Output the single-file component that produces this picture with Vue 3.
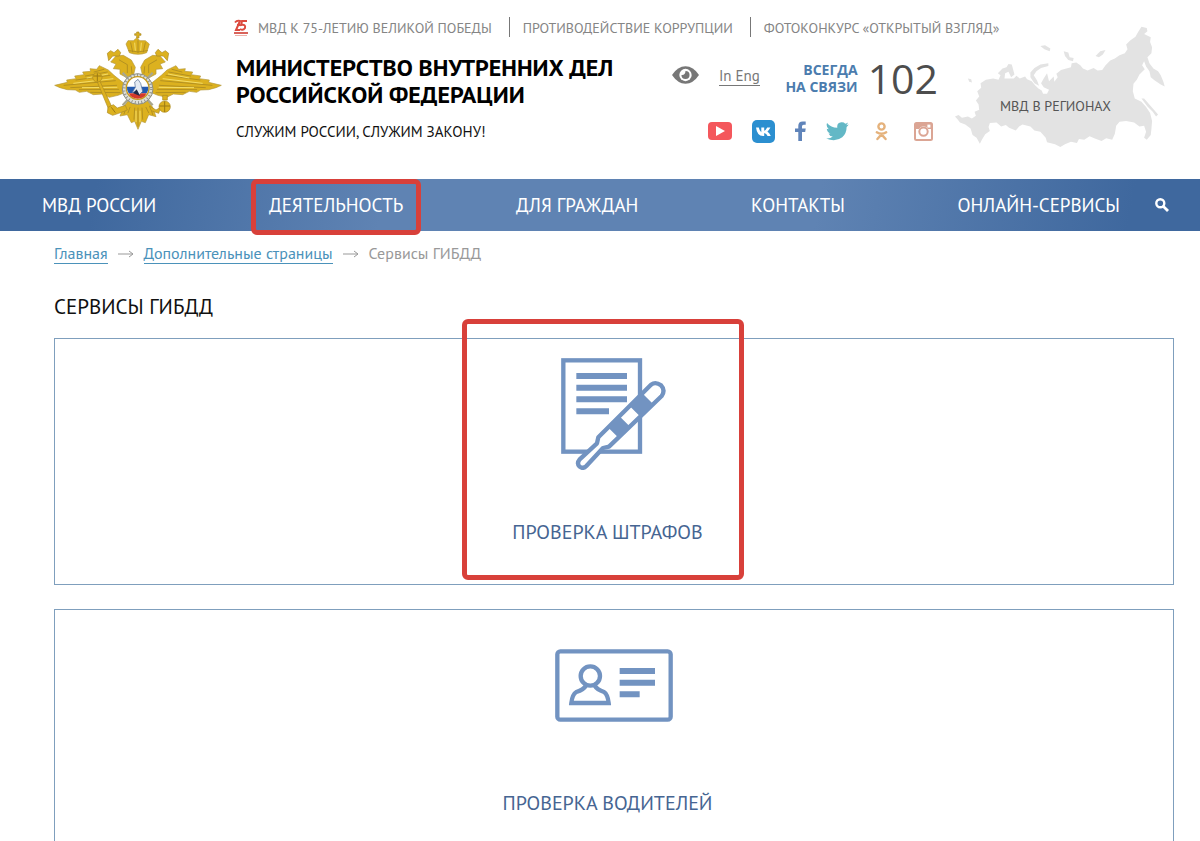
<template>
  <div class="page">
    <header class="header">
      <a href="#" class="emblem" aria-label="Главная страница">
        <svg viewBox="42 30 504 300" aria-hidden="true">
          <g fill="#dcb11f" stroke="#b5983c" stroke-width="2">
            <path d="M252 190 L222 166 L205 150 L178 137 L170 148 L150 146 L152 154 L128 156 L132 164 L104 168 L108 176 L80 180 L82 187 L44 196 L60 203 L82 209 L106 210 L118 217 L140 214 L160 224 L188 222 L208 232 L234 226 L254 218 Z" />
            <path d="M334 190 L364 166 L381 150 L408 137 L416 148 L436 146 L434 154 L458 156 L454 164 L482 168 L478 176 L508 180 L506 187 L544 196 L528 203 L506 209 L482 210 L470 217 L448 214 L428 224 L400 222 L380 232 L354 226 L334 218 Z" />
            <path d="M266 240 L250 262 L240 288 L262 284 L274 308 L284 304 L294 328 L304 304 L316 308 L326 284 L348 290 L338 262 L322 240 Z" />
            <path d="M280 168 L286 142 L274 120 L250 106 L228 108 L212 126 L228 132 L220 146 L240 148 L240 162 L262 174 Z" />
            <path d="M308 168 L302 142 L314 120 L338 106 L360 108 L376 126 L360 132 L368 146 L348 148 L348 162 L326 174 Z" />
            <path d="M268 98 L258 72 L264 62 L280 62 L290 54 L300 62 L316 62 L328 72 L320 98 Q294 108 268 98 Z" />
          </g>
          <g fill="none" stroke="#ab8a22" stroke-width="2.5" stroke-linecap="round">
            <path d="M72 196 L226 182 M92 203 L230 196 M118 209 L236 208 M152 217 L240 218 M108 180 L210 166 M136 168 L202 156 M162 156 L192 148" />
            <path d="M516 196 L362 182 M496 203 L358 196 M470 209 L352 208 M436 217 L348 218 M480 180 L378 166 M452 168 L386 156 M426 156 L396 148" />
            <path d="M270 262 L264 278 M284 264 L282 298 M294 264 L294 318 M306 264 L308 298 M318 262 L326 278 M256 270 L252 282 M334 270 L338 284" />
            <path d="M272 68 L278 96 M294 62 L294 98 M316 68 L310 96 M266 92 Q294 100 322 92" />
            <path d="M238 120 L262 134 L262 158 M350 120 L326 134 L326 158 M274 140 L276 160 M314 140 L312 160" />
          </g>
          <g fill="none" stroke="#f4dd68" stroke-width="3">
            <path d="M100 190 L220 176 M126 203 L232 202 M140 174 L204 162 M488 190 L368 176 M462 203 L356 202 M448 174 L384 162" />
            <path d="M288 272 L288 306 M300 272 L300 306 M284 68 L286 92 M304 68 L302 92" />
          </g>
          <g fill="#dcb11f" stroke="#ab8a22" stroke-width="2">
            <path d="M290 54 L290 46 L284 46 L284 41 L290 41 L290 36 L297 36 L297 41 L303 41 L303 46 L297 46 L297 54 Z" />
            <path d="M206 122 L202 100 L212 92 L222 98 L234 88 L242 98 L238 108 L218 108 Z" />
            <path d="M382 122 L386 100 L376 92 L366 98 L354 88 L346 98 L350 108 L370 108 Z" />
            <path d="M172 186 L180 184 L216 262 L206 268 Z" />
            <circle cx="172" cy="172" r="14" />
            <path d="M204 262 L220 254 L232 264 L256 256 L262 270 L236 280 L218 286 L202 278 Z" />
            <path d="M328 258 L348 270 L362 262 L356 280 L334 272 Z" />
            <circle cx="374" cy="260" r="17" />
            <path d="M368 240 L368 226 L382 226 L382 240 Z" />
          </g>
          <g fill="none" stroke="#9c7a14" stroke-width="3">
            <path d="M160 168 H184 M172 160 V184 M358 258 H390 M374 244 V276 M214 262 L226 278" />
          </g>
          <g stroke="#a9a68d" stroke-width="7">
            <path d="M248 158 L338 256 M338 158 L248 256" />
          </g>
          <circle cx="293" cy="207" r="46" fill="#dedfd8" stroke="#8d8e83" stroke-width="3" />
          <circle cx="293" cy="207" r="41" fill="none" stroke="#92938a" stroke-width="9" stroke-dasharray="3 7" />
          <circle cx="293" cy="204" r="34" fill="#fff" stroke="#c79a1a" stroke-width="4" />
          <path d="M261 200 H325 Q326 212 320 220 H266 Q260 212 261 200 Z" fill="#245ab0" />
          <path d="M266 220 H320 Q312 236 293 236 Q274 236 266 220 Z" fill="#d33a2d" />
          <path d="M284 186 L294 178 L302 190 L308 214 L298 224 L290 212 L276 218 L286 202 Z" fill="#e4eaf2" stroke="#526a91" stroke-width="2" />
          <path d="M280 220 L290 208 L300 228 Z" fill="#202b48" />
        </svg>
      </a>

      <ul class="promo">
        <li v-for="(item, i) in promo" :key="item">
          <a href="#">
            <svg v-if="i === 0" class="victory" viewBox="0 0 16 18" aria-hidden="true">
              <g fill="none" stroke="#dc4a3e" stroke-width="2">
                <path d="M2 3.5 Q4 1 7 2 L3 11 H7" />
                <path d="M14 2 H9 L8 6 Q13 5 12 9 Q10 12 7 10 M4 6 H7" />
              </g>
              <path d="M1 13 H15 V15 H1 Z" fill="#d9635b" />
              <path d="M2 16 H14 V17 H2 Z" fill="#edb1aa" />
            </svg>
            {{ item }}
          </a>
        </li>
      </ul>

      <div class="identity">
        <h1>Министерство внутренних дел Российской Федерации</h1>
        <p>Служим России, служим закону!</p>
      </div>

      <div class="contacts">
        <div class="tools">
          <button type="button" class="vision" aria-label="Версия для слабовидящих">
            <svg viewBox="0 0 28 18" aria-hidden="true">
              <path d="M0 9 Q6 0 14 0 Q22 0 28 9 Q22 18 14 18 Q6 18 0 9 Z" fill="#777" />
              <circle cx="14" cy="9" r="6.4" fill="#fff" />
              <path d="M14 4.8 A4.2 4.2 0 1 1 9.8 9 Q13.8 9.4 14 4.8 Z" fill="#777" />
            </svg>
          </button>
          <a href="#" class="lang">In Eng</a>
          <div class="hotline">
            <span>Всегда<br />на связи</span>
            <strong>102</strong>
          </div>
        </div>
        <div class="social">
          <a href="#" aria-label="YouTube">
            <svg width="24" height="18" viewBox="0 0 24 18">
              <rect width="24" height="18" rx="4" fill="#f4575c" />
              <path d="M8 4 L17 9 L8 14 Z" fill="#fff" />
            </svg>
          </a>
          <a href="#" aria-label="ВКонтакте">
            <svg width="23" height="23" viewBox="0 0 23 23">
              <rect width="23" height="23" rx="5" fill="#2b8fd0" />
              <path d="M4 7.5 H6.8 Q7.5 11 9.3 12.3 V7.5 H12.2 V10.8 Q14 10 15.2 7.5 H18.4 Q17.2 10 15.4 11.5 Q17.7 13 18.8 16 H15.6 Q14.5 13.6 12.2 13 V16 H11 Q5 15.8 4 7.5 Z" fill="#fff" />
            </svg>
          </a>
          <a href="#" aria-label="Facebook">
            <svg width="11" height="20" viewBox="0 0 11 20">
              <path d="M3.3 20 V11 H0 V7.4 H3.3 V4.8 Q3.3 0.4 7.8 0.4 H10.7 V3.8 H8.7 Q7 3.8 7 5.3 V7.4 H10.7 L10.2 11 H7 V20 Z" fill="#6084ba" />
            </svg>
          </a>
          <a href="#" aria-label="Twitter">
            <svg width="23" height="19" viewBox="0 0 24 20">
              <path d="M1 1 Q5 6 11.8 6.1 Q11 1 16 0.3 Q18.6 0 20.2 1.8 Q21.8 1.5 23 0.6 Q22.5 2.4 21.2 3.3 L23.8 2.7 Q23 4.2 21.6 5.2 Q21.6 12 17 16 Q10 21.5 0 17.3 Q4.5 17.6 7 15.3 Q3.6 15 2.6 12 H4.6 Q1 10.6 0.7 7 L2.8 7.6 Q-0.4 4.8 1 1 Z" fill="#63b8c6" />
            </svg>
          </a>
          <a href="#" aria-label="Одноклассники">
            <svg width="13" height="19" viewBox="0 0 13 19">
              <g fill="none" stroke="#e5b27c" stroke-width="2.4" stroke-linecap="round">
                <circle cx="6.5" cy="4.5" r="3.1" />
                <path d="M1.8 10.3 Q6.5 13.3 11.2 10.3 M6.5 12.4 L2.4 17 M6.5 12.4 L10.6 17" />
              </g>
            </svg>
          </a>
          <a href="#" aria-label="Instagram">
            <svg width="19" height="19" viewBox="0 0 19 19">
              <rect x="1" y="1" width="17" height="17" rx="1.5" fill="none" stroke="#dba594" stroke-width="2" />
              <path d="M1 2 H18 V7 H14 A5 5 0 0 0 5 7 H1 Z" fill="#dba594" />
              <circle cx="9.5" cy="9.6" r="4.2" fill="#fff" stroke="#dba594" stroke-width="2" />
              <rect x="13.4" y="2.6" width="3" height="3" fill="#fff" />
            </svg>
          </a>
        </div>
      </div>

      <a href="#" class="regions">
        <svg viewBox="40 45 645 370" aria-hidden="true">
          <g fill="#e3e3e3">
            <path d="M45 320 L56 316 L66 324 L84 320 L96 326 L108 318 L104 306 L118 300 L116 284 L108 272 L118 260 L112 244 L124 234 L122 220 L138 210 L160 206 L176 210 L182 196 L174 190 L188 176 L200 172 L206 162 L216 164 L224 194 L214 202 L206 186 L196 190 L194 206 L222 206 L230 198 L240 206 L256 200 L262 208 L276 214 L286 226 L296 236 L306 242 L310 252 L322 252 L328 240 L312 232 L304 220 L312 206 L322 190 L328 214 L342 200 L344 216 L354 202 L350 192 L364 180 L380 176 L394 172 L396 160 L410 158 L422 166 L430 176 L444 182 L462 174 L474 182 L488 180 L498 166 L512 152 L526 146 L540 136 L556 130 L564 118 L560 104 L572 92 L588 80 L596 66 L606 50 L622 54 L624 64 L614 72 L634 82 L632 96 L638 112 L636 130 L624 142 L630 160 L642 176 L656 184 L664 196 L672 216 L676 230 L664 224 L646 212 L634 202 L630 184 L620 170 L614 154 L608 166 L616 178 L600 194 L592 210 L582 222 L580 244 L586 266 L606 276 L620 292 L632 310 L638 334 L636 358 L634 376 L622 390 L614 384 L620 366 L614 348 L600 350 L584 338 L560 334 L540 336 L530 348 L526 372 L518 390 L500 386 L486 394 L464 386 L450 380 L434 390 L418 388 L412 400 L394 396 L376 404 L362 412 L346 404 L322 398 L318 384 L302 366 L284 362 L272 350 L248 344 L238 350 L228 362 L208 354 L198 346 L184 350 L170 338 L150 340 L146 352 L150 364 L136 374 L126 390 L120 402 L110 384 L98 376 L92 356 L76 344 L60 338 L52 328 Z" />
            <path d="M272 188 L284 174 L302 164 L326 160 L326 168 L304 174 L290 184 L282 196 L292 212 L298 228 L284 220 L272 202 Z" />
            <path d="M302 108 L316 106 L332 116 L330 124 L314 118 Z M372 124 L386 128 L390 142 L402 144 L400 154 L386 150 L376 138 Z M468 138 L482 124 L498 120 L490 134 L478 142 Z" />
            <path d="M84 206 L94 208 L96 218 L88 216 Z M606 266 L614 266 L656 314 L650 320 L640 306 L624 290 Z" />
          </g>
        </svg>
        <span>МВД в регионах</span>
      </a>
    </header>

    <nav class="nav">
      <ul>
        <li v-for="item in menu" :key="item.title">
          <a href="#" :class="{ marked: item.marked }">{{ item.title }}</a>
        </li>
      </ul>
      <button type="button" aria-label="Поиск">
        <svg viewBox="0 0 14 14" aria-hidden="true">
          <circle cx="5.3" cy="5.3" r="4" fill="none" stroke="#fff" stroke-width="2.4" />
          <path d="M8.2 8.2 L13 13" stroke="#fff" stroke-width="2.8" />
        </svg>
      </button>
    </nav>

    <main class="content">
      <div class="crumbs">
        <a href="#">Главная</a>
        <svg viewBox="0 0 16 8" aria-hidden="true"><path d="M0 4 H15 M11 1 L15 4 L11 7" /></svg>
        <a href="#">Дополнительные страницы</a>
        <svg viewBox="0 0 16 8" aria-hidden="true"><path d="M0 4 H15 M11 1 L15 4 L11 7" /></svg>
        <span>Сервисы ГИБДД</span>
      </div>

      <h2>Сервисы ГИБДД</h2>

      <a href="#" class="card marked">
        <span class="pic">
          <svg width="106" height="112" viewBox="0 0 318 336" aria-hidden="true">
            <rect x="7" y="7" width="230" height="274" fill="none" stroke="#7293c1" stroke-width="13" />
            <path d="M46 54 H198 M46 89 H198 M46 124 H198 M46 160 H144" stroke="#7293c1" stroke-width="18" />
            <path d="M270 80 Q284 70 300 82 Q314 97 302 114 L144 266 L126 270 L76 324 Q66 334 56 326 Q46 316 56 304 L108 256 L112 238 Z" fill="#fff" stroke="#7293c1" stroke-width="13" stroke-linejoin="round" />
            <path d="M243 105 L277 139 L239 177 L205 143 Z M174 173 L208 207 L174 241 L140 207 Z" fill="#7293c1" />
          </svg>
        </span>
        <span class="label">Проверка штрафов</span>
      </a>

      <a href="#" class="card">
        <span class="pic">
          <svg width="118" height="73" viewBox="0 0 354 219" aria-hidden="true">
            <g fill="none" stroke="#7293c1" stroke-width="13">
              <rect x="7" y="7" width="340" height="205" rx="9" />
              <circle cx="106" cy="81" r="29" />
              <path d="M93 110 Q86 122 64 129 Q52 136 49 162 H161 Q158 136 147 129 Q126 122 119 110" />
            </g>
            <path d="M194 66 H300 M194 101 H300 M194 136 H254" stroke="#7293c1" stroke-width="18" />
          </svg>
        </span>
        <span class="label">Проверка водителей</span>
      </a>
    </main>
  </div>
</template>

<script setup>
const promo = [
  'МВД к 75-летию великой Победы',
  'Противодействие коррупции',
  'Фотоконкурс «Открытый взгляд»',
]

const menu = [
  { title: 'МВД России' },
  { title: 'Деятельность', marked: true },
  { title: 'Для граждан' },
  { title: 'Контакты' },
  { title: 'Онлайн-сервисы' },
]
</script>

<style>
body {
  margin: 0;
  background: #fff;
}
</style>

<style scoped>
.page {
  height: 100vh;
  overflow: hidden;
  font-family: 'PT Sans', 'Noto Sans', sans-serif;
  color: #111;
}

a {
  color: inherit;
  text-decoration: none;
}

button {
  padding: 0;
  border: 0;
  background: none;
  cursor: pointer;
}

svg {
  display: block;
}

ul {
  display: flex;
  margin: 0;
  padding: 0;
  list-style: none;
}

.header {
  display: grid;
  grid-template-columns: 182px 1fr 281px 215px;
  grid-template-rows: 36px auto;
  padding: 17px 32px 31px 54px;
}

.emblem {
  grid-area: 1 / 1 / 3 / 2;
  padding-top: 13px;
}

.emblem svg {
  width: 168px;
  height: 100px;
}

.promo {
  grid-area: 1 / 2 / 2 / 5;
  z-index: 1;
  height: 20px;
  font-size: 14px;
  line-height: 22px;
  color: #858585;
  text-transform: uppercase;
  white-space: nowrap;
}

.promo li + li {
  margin-left: 17px;
  padding-left: 13px;
  border-left: 1px solid #777;
}

.promo a {
  display: flex;
}

.victory {
  width: 16px;
  height: 18px;
  margin: 2px 9px 0 -3px;
}

.identity {
  grid-area: 2 / 2 / 3 / 3;
  text-transform: uppercase;
}

.identity h1 {
  max-width: 400px;
  margin: 1px 0 0;
  font-size: 24px;
  font-weight: 700;
  line-height: 27px;
  color: #000;
}

.identity p {
  margin: 14px 0 0;
  font-size: 15px;
  line-height: 20px;
}

.contacts {
  grid-area: 2 / 3 / 3 / 4;
  padding-right: 15px;
}

.tools {
  display: flex;
  align-items: center;
  height: 50px;
  color: #777;
}

.vision {
  margin-bottom: 6px;
}

.vision svg {
  width: 27px;
  height: 18px;
}

.lang {
  margin: 0 0 4px 20px;
  border-bottom: 1px solid #777;
  font-size: 15px;
  line-height: 18px;
}

.hotline {
  display: flex;
  align-items: center;
  gap: 10px;
  margin-left: auto;
  font-family: 'Open Sans', 'Noto Sans', sans-serif;
}

.hotline span {
  font-size: 14px;
  font-weight: 700;
  line-height: 17px;
  text-align: right;
  text-transform: uppercase;
  color: #4b7cae;
}

.hotline strong {
  font-size: 41px;
  font-weight: 400;
  line-height: 48px;
  color: #4d4d4d;
}

.social {
  display: flex;
  align-items: center;
  gap: 20px;
  height: 24px;
  margin-top: 16px;
  padding-left: 36px;
}

.social a:nth-child(n + 5) {
  margin-left: 6px;
}

.regions {
  display: grid;
  grid-area: 1 / 4 / 3 / 5;
  width: 215px;
  margin-top: 8px;
}

.regions svg,
.regions span {
  grid-area: 1 / 1;
}

.regions svg {
  width: 215px;
  height: 123px;
}

.regions span {
  align-self: center;
  margin: 38px 10px 0 0;
  font-size: 14px;
  line-height: 16px;
  text-align: center;
  text-transform: uppercase;
  color: #555;
}

.nav {
  display: flex;
  align-items: center;
  gap: 35px;
  height: 52px;
  padding: 0 31px 0 42px;
  background: linear-gradient(100deg, #3f689e 8%, #5f83b3 32%, #5f83b3 68%, #3f689e 94%);
}

.nav ul {
  flex: 1;
  justify-content: space-between;
}

.nav li a {
  position: relative;
  display: block;
  font-size: 19px;
  line-height: 24px;
  text-transform: uppercase;
  white-space: nowrap;
  color: #fff;
}

.nav .marked::after {
  content: '';
  position: absolute;
  inset: -14px -18px -18px;
  border: 5px solid #d8403a;
  border-radius: 6px;
}

.nav svg {
  width: 14px;
  height: 14px;
}

.content {
  padding: 12px 26px 0 54px;
}

.crumbs {
  display: flex;
  align-items: flex-start;
  gap: 10px;
  font-size: 16px;
  line-height: 20px;
  color: #999;
}

.crumbs a {
  border-bottom: 1px solid #4b92ba;
  color: #4b92ba;
}

.crumbs svg {
  width: 16px;
  height: 8px;
  margin-top: 7px;
  fill: none;
  stroke: #999;
}

h2 {
  margin: 31px 0 19px;
  font-size: 21px;
  font-weight: 400;
  line-height: 24px;
  text-transform: uppercase;
  color: #111;
}

.card {
  position: relative;
  display: flex;
  flex-direction: column;
  align-items: center;
  height: 245px;
  margin-bottom: 24px;
  border: 1px solid #7f9fbd;
}

.pic {
  display: flex;
  align-items: center;
  height: 150px;
}

.label {
  margin-top: 31px;
  padding-right: 13px;
  font-size: 20px;
  line-height: 24px;
  text-transform: uppercase;
  color: #466592;
}

.card.marked::after {
  content: '';
  position: absolute;
  top: -20px;
  bottom: 4px;
  left: calc(50% - 152px);
  width: 272px;
  border: 5px solid #d8403a;
  border-radius: 6px;
}
</style>
